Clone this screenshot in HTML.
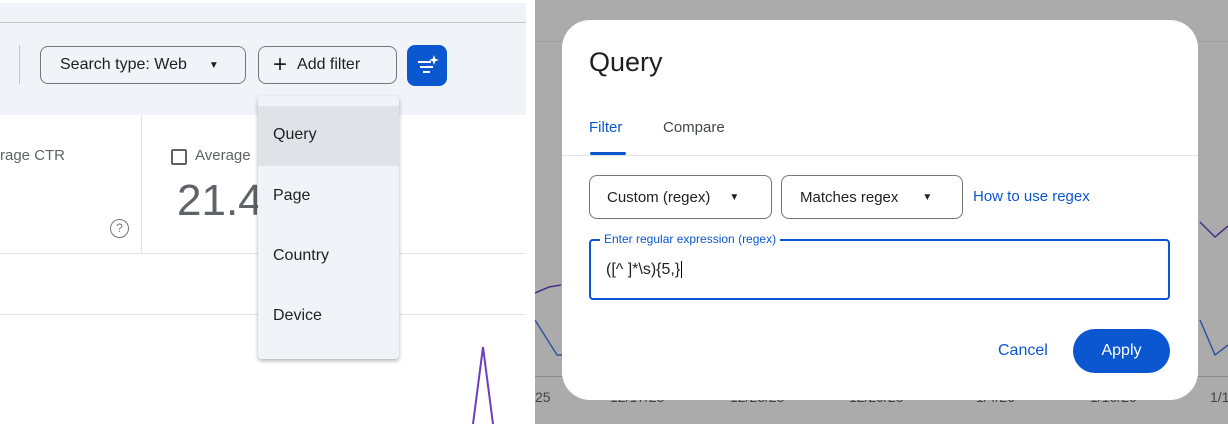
<!DOCTYPE html>
<html><head><style>
*{box-sizing:border-box;margin:0;padding:0}
body{width:1228px;height:424px;position:relative;overflow:hidden;font-family:"Liberation Sans",Arial,sans-serif;background:#fff}
.a{position:absolute}
.chip{position:absolute;border:1px solid #747775;border-radius:8px;font-size:16px;color:#1f1f1f;display:flex;align-items:center}
.item{position:absolute;left:0;width:141px;padding-left:15px;font-size:16px;color:#1f1f1f}
</style></head><body>
<!-- left -->
<div class="a" style="left:0;top:3px;width:526px;height:112px;background:#f0f4f9"></div>
<div class="a" style="left:0;top:22px;width:526px;height:1px;background:#c4c7c5"></div>
<div class="a" style="left:19px;top:45px;width:1px;height:39px;background:#c4c7c5"></div>
<div class="chip" style="left:40px;top:46px;width:206px;height:38px;padding-left:19px">Search type: Web<span style="margin-left:22px;font-size:10px">▼</span></div>
<div class="chip" style="left:258px;top:46px;width:139px;height:38px;padding-left:14px"><span style="font-size:24px;font-weight:300;margin-right:10px;line-height:1">+</span>Add filter</div>
<div class="a" style="left:407px;top:45px;width:40px;height:41px;background:#0b57d0;border-radius:8px">
<svg width="40" height="41" viewBox="0 0 40 41"><g stroke="#fff" stroke-width="2"><line x1="11" y1="17" x2="24" y2="17"/><line x1="13" y1="22" x2="26" y2="22"/><line x1="16" y1="27" x2="23" y2="27"/></g><path d="M27 10 L28.3 13.7 L32 15 L28.3 16.3 L27 20 L25.7 16.3 L22 15 L25.7 13.7Z" fill="#fff"/></svg></div>
<div class="a" style="left:0;top:253px;width:526px;height:1px;background:#e3e3e3"></div>
<div class="a" style="left:0;top:314px;width:526px;height:1px;background:#e3e3e3"></div>
<div class="a" style="left:141px;top:115px;width:1px;height:138px;background:#e3e3e3"></div>
<div class="a" style="left:0;top:147px;font-size:15px;color:#5f6368">rage CTR</div>
<div class="a" style="left:110px;top:219px;width:19px;height:19px;border:1.5px solid #777;border-radius:50%;font-size:12px;color:#777;text-align:center;line-height:16px">?</div>
<div class="a" style="left:171px;top:149px;width:16px;height:16px;border:2px solid #5f6368;border-radius:2px"></div>
<div class="a" style="left:195px;top:147px;font-size:15px;color:#5f6368">Average</div>
<div class="a" style="left:177px;top:176px;font-size:44px;color:#5f6368">21.4</div>
<svg class="a" style="left:0;top:0" width="535" height="424"><polyline points="473,424 483,347 493,424" fill="none" stroke="#6b3fbd" stroke-width="2"/></svg>
<div class="a" style="left:258px;top:96px;width:141px;height:263px;background:#f0f4f9;border-radius:4px;box-shadow:0 2px 4px rgba(0,0,0,.3)">
<div class="a" style="left:0;top:10px;width:141px;height:60px;background:#dfe3e8"></div>
<div class="item" style="top:30px">Query</div>
<div class="item" style="top:91px">Page</div>
<div class="item" style="top:151px">Country</div>
<div class="item" style="top:211px">Device</div>
</div>
<!-- right -->
<div class="a" style="left:526px;top:0;width:9px;height:424px;background:#fff"></div>
<div class="a" style="left:535px;top:0;width:693px;height:424px;background:#ababab"></div>
<div class="a" style="left:535px;top:41px;width:693px;height:1px;background:#a0a0a0"></div>
<div class="a" style="left:535px;top:376px;width:693px;height:1px;background:#888"></div>
<svg class="a" style="left:535px;top:0" width="693" height="424"><polyline points="0,293 14,287 26,285" fill="none" stroke="#4a2f86" stroke-width="1.5"/><polyline points="0,320 22,355 30,355" fill="none" stroke="#2f55a0" stroke-width="1.5"/><polyline points="665,222 680,237 693,226" fill="none" stroke="#4a2f86" stroke-width="1.5"/><polyline points="665,320 680,355 693,345" fill="none" stroke="#2f55a0" stroke-width="1.5"/></svg>
<div class="a" style="left:535px;top:389px;width:700px;font-size:14px;color:#444">
<span class="a" style="left:0">25</span><span class="a" style="left:75px">12/17/25</span><span class="a" style="left:195px">12/23/25</span><span class="a" style="left:314px">12/29/25</span><span class="a" style="left:441px">1/4/26</span><span class="a" style="left:555px">1/10/26</span><span class="a" style="left:675px">1/1</span></div>
<div class="a" style="left:562px;top:20px;width:636px;height:380px;background:#fff;border-radius:28px">
<div class="a" style="left:27px;top:27px;font-size:27px;color:#1f1f1f">Query</div>
<div class="a" style="left:27px;top:99px;font-size:15px;color:#0b57d0">Filter</div>
<div class="a" style="left:101px;top:99px;font-size:15px;color:#444746">Compare</div>
<div class="a" style="left:28px;top:132px;width:36px;height:3px;background:#0b57d0;border-radius:2px"></div>
<div class="a" style="left:0;top:135px;width:636px;height:1px;background:#e3e3e3"></div>
<div class="chip" style="left:27px;top:155px;width:183px;height:44px;padding-left:17px;font-size:15px">Custom (regex)<span style="margin-left:19px;font-size:10px">▼</span></div>
<div class="chip" style="left:219px;top:155px;width:182px;height:44px;padding-left:18px;font-size:15px">Matches regex<span style="margin-left:24px;font-size:10px">▼</span></div>
<div class="a" style="left:411px;top:168px;font-size:15px;color:#0b57d0">How to use regex</div>
<div class="a" style="left:27px;top:219px;width:581px;height:61px;border:2px solid #0b57d0;border-radius:4px"></div>
<div class="a" style="left:38px;top:212px;padding:0 4px;background:#fff;font-size:12px;color:#0b57d0">Enter regular expression (regex)</div>
<div class="a" style="left:44px;top:241px;font-size:16px;color:#1f1f1f">([^ ]*\s){5,}<span style="border-left:1px solid #000;margin-left:1px"></span></div>
<div class="a" style="left:436px;top:322px;font-size:16px;color:#0b57d0">Cancel</div>
<div class="a" style="left:511px;top:309px;width:97px;height:44px;background:#0b57d0;border-radius:22px;color:#fff;font-size:16px;text-align:center;line-height:44px">Apply</div>
</div>
</body></html>
